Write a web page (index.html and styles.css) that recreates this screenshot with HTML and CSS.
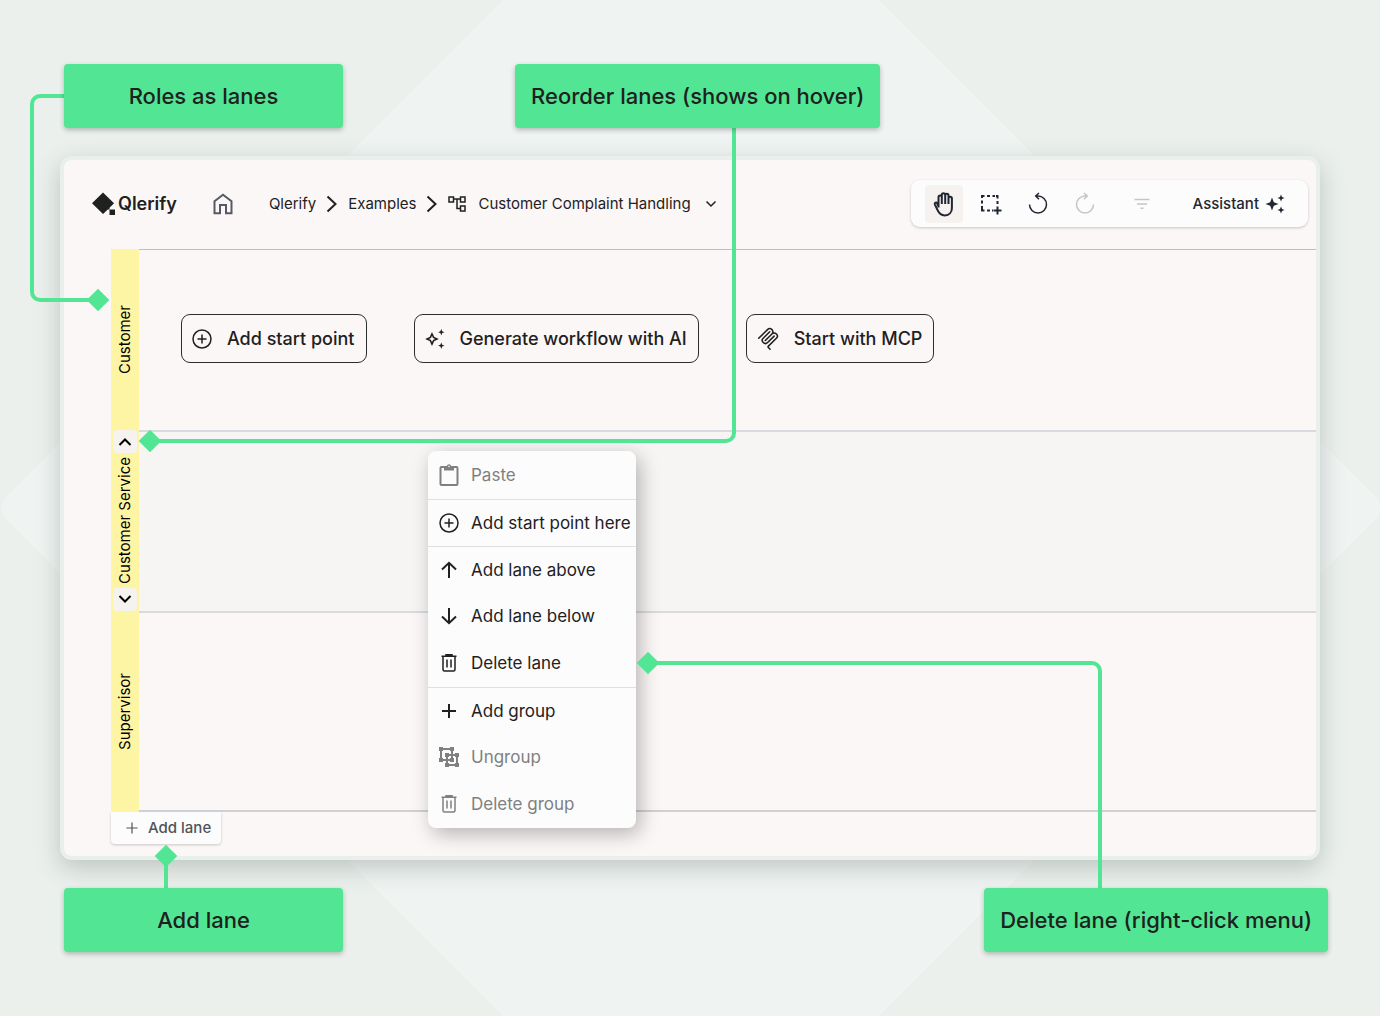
FILE: index.html
```html
<!DOCTYPE html>
<html lang="en">
<head>
<meta charset="utf-8">
<meta name="viewport" content="width=device-width, initial-scale=1">
<title>Qlerify – lanes</title>
<link rel="stylesheet" href="styles.css">
</head>
<body>
<svg class="backdrop" viewBox="0 0 1380 1016" preserveAspectRatio="xMidYMid slice" aria-hidden="true"><rect x="199" y="16" width="984" height="984" rx="14" transform="rotate(45 691 508)"/></svg>

<svg class="sprite" aria-hidden="true">
  <symbol id="plus-circle" viewBox="0 0 20 20"><circle cx="10" cy="10" r="9"/><path d="M10 5.500v9M5.500 10h9"/></symbol>
  <symbol id="trash" viewBox="0 0 20 20"><path d="M2.500 3.300h15M7 3V1.800h6V3M4 3.500v13a1.500 1.500 0 0 0 1.500 1.500h9a1.500 1.500 0 0 0 1.500-1.500v-13M8 6.500v8M12 6.500v8"/></symbol>
  <symbol id="plus" viewBox="0 0 20 20"><path d="M10 3v14M3 10h14"/></symbol>
  <symbol id="chevron" viewBox="0 0 12 18"><path d="M1.500 1.500 9.500 9l-8 7.500"/></symbol>
</svg>

<main class="stage">
  <div class="callouts callouts-top">
    <div class="callout">Roles as lanes</div>
    <div class="callout callout-reorder">Reorder lanes (shows on hover)</div>
  </div>

  <section class="window">
    <header class="header">
      <a class="logo" href="#">
        <svg width="24" height="24" viewBox="0 0 24 24"><path d="M11 .5 22 11.300 17.500 15.800V17.500H15.800L11 22 0 11.300z"/><path d="M17.500 17.500h5.500V23h-5.500z"/></svg>
        <span>Qlerify</span>
      </a>
      <a class="home" href="#" aria-label="Home"><svg class="line" width="20" height="22" viewBox="0 0 20 22"><path d="M1.500 8.300 10 1.800l8.500 6.500V20.200H13V12H7v8.200H1.500z"/></svg></a>
      <nav class="crumbs" aria-label="Breadcrumb">
        <a href="#">Qlerify</a>
        <svg class="line" width="12" height="18"><use href="#chevron"/></svg>
        <a href="#">Examples</a>
        <svg class="line" width="12" height="18"><use href="#chevron"/></svg>
        <a class="current" href="#">
          <svg class="line thin" width="18" height="18" viewBox="0 0 18 18"><path d="M1 2h4.500v5H1zM12.500 2H17v5h-4.500zM12.500 11H17v5h-4.500zM5.500 4h7M9 4v9.500h3.500"/></svg>
          Customer Complaint Handling
        </a>
        <button class="more" type="button" aria-label="Workflow options"><svg class="line thin" width="12" height="8" viewBox="0 0 12 8"><path d="M1.500 1.500 6 6l4.500-4.500"/></svg></button>
      </nav>
      <div class="toolbar">
        <button class="tool active" type="button" aria-label="Pan"><svg class="line" width="24" height="28" viewBox="0 0 24 28"><path d="M6.500 17.500V7.200a1.600 1.600 0 0 1 3.300 0V14M9.800 13V5a1.700 1.700 0 0 1 3.400 0v9M13.200 13V5.500a1.600 1.600 0 0 1 3.300 0V14M16.500 13V8.500a1.700 1.700 0 0 1 3.400 0V18c0 4.600-2.900 7.400-7 7.400-3.600 0-5.700-1.600-7-4.700L2.800 14.400c-.6-1.700 1.500-2.500 2.300-1.100l1.400 3"/></svg></button>
        <button class="tool" type="button" aria-label="Select area"><svg class="line" width="22" height="22" viewBox="0 0 22 22"><path d="M2 5V3h2.500M7 3h3M12.500 3h2.500M16 3h1.500v2.500M17.500 8v3M2 7.500v3M2 13v4.500h2.500M7 17.500h3M12 17.500h1M17.500 13.500v8M13.500 17.500h8"/></svg></button>
        <button class="tool" type="button" aria-label="Undo"><svg class="line thin" width="22" height="24" viewBox="0 0 22 24"><path d="M2.500 12.500a8.500 8.500 0 1 0 8.500-8.500H9M12 1 8.700 4 12 7.200"/></svg></button>
        <button class="tool" type="button" aria-label="Redo" disabled><svg class="line thin" width="22" height="24" viewBox="0 0 22 24"><path d="M19.500 12.500A8.500 8.500 0 1 1 11 4h2M10 1l3.300 3L10 7.200"/></svg></button>
        <button class="tool filter" type="button" aria-label="Filter" disabled><svg class="line thin" width="16" height="12" viewBox="0 0 16 12"><path d="M.5 1.500h15M3 6h10M6.500 10.200h3"/></svg></button>
        <button class="assistant" type="button">Assistant
          <svg width="20" height="20" viewBox="0 0 20 20"><path d="M7 3.500 8.800 8.200 13.500 10 8.800 11.800 7 16.500 5.200 11.800.5 10l4.700-1.800zM16 .5l1 2.500 2.500 1-2.500 1-1 2.500-1-2.500-2.500-1 2.500-1zM16 12.500l1 2.500 2.500 1-2.500 1-1 2.500-1-2.500-2.500-1 2.500-1z"/></svg>
        </button>
      </div>
    </header>

    <div class="lanes">
      <div class="lane">
        <div class="lane-head"><span>Customer</span></div>
        <div class="lane-body">
          <button class="start" type="button"><svg class="line thin" width="20" height="20"><use href="#plus-circle"/></svg>Add start point</button>
          <button class="start" type="button"><svg width="20" height="20" viewBox="0 0 20 20"><path class="hollow" d="M7 5 8.600 8.400 12 10 8.600 11.600 7 15 5.400 11.600 2 10l3.400-1.600z"/><path d="M16.300 0l.9 2.300 2.300.9-2.300.9-.9 2.300-.9-2.300-2.300-.9 2.300-.9zM16.300 13.500l.9 2.300 2.300.9-2.300.9-.9 2.300-.9-2.300-2.300-.9 2.300-.9z"/></svg>Generate workflow with AI</button>
          <button class="start" type="button"><svg width="22" height="24" viewBox="0 0 24 24"><path d="M15.688 2.343a2.588 2.588 0 00-3.610 0l-9.626 9.440a.863.863 0 01-1.203 0 .823.823 0 010-1.180l9.626-9.440a4.313 4.313 0 016.016 0 4.116 4.116 0 011.204 3.540 4.300 4.300 0 013.609 1.180l.05.05a4.115 4.115 0 010 5.900l-8.706 8.537a.274.274 0 000 .393l1.788 1.754a.823.823 0 010 1.180.863.863 0 01-1.203 0l-1.788-1.753a1.920 1.920 0 010-2.754l8.706-8.538a2.470 2.470 0 000-3.540l-.05-.049a2.588 2.588 0 00-3.607-.003l-7.172 7.034-.002.002-.098.097a.863.863 0 01-1.204 0 .823.823 0 010-1.180l7.273-7.133a2.470 2.470 0 00-.003-3.537z"/><path d="M14.485 4.703a.823.823 0 000-1.180.863.863 0 00-1.204 0l-7.119 6.982a4.115 4.115 0 000 5.900 4.314 4.314 0 006.016 0l7.120-6.982a.823.823 0 000-1.180.863.863 0 00-1.204 0l-7.119 6.982a2.588 2.588 0 01-3.610 0 2.470 2.470 0 010-3.540l7.120-6.982z"/></svg>Start with MCP</button>
        </div>
      </div>
      <div class="lane hovered">
        <div class="lane-head">
          <button class="move" type="button" aria-label="Move lane up"><svg class="line" width="14" height="10" viewBox="0 0 14 10"><path d="M1.500 8 7 2.500 12.500 8"/></svg></button>
          <span>Customer Service</span>
          <button class="move" type="button" aria-label="Move lane down"><svg class="line" width="14" height="10" viewBox="0 0 14 10"><path d="M1.500 2 7 7.500 12.500 2"/></svg></button>
        </div>
        <div class="lane-body"></div>
      </div>
      <div class="lane last">
        <div class="lane-head"><span>Supervisor</span></div>
        <div class="lane-body"></div>
      </div>
      <button class="add-lane" type="button"><svg class="line thin" width="16" height="16"><use href="#plus"/></svg>Add lane</button>
    </div>
  </section>

  <div class="callouts callouts-bottom">
    <div class="callout">Add lane</div>
    <div class="callout">Delete lane (right-click menu)</div>
  </div>

  <div class="connector to-roles"></div>
  <div class="connector to-reorder"></div>
  <div class="connector to-delete"></div>
  <div class="connector to-add"></div>

  <div class="menu" role="menu">
    <button role="menuitem" type="button" disabled><svg class="line" width="20" height="24" viewBox="0 0 20 24"><rect x="1.500" y="4" width="17" height="18" rx="1"/><path class="solid" d="M5 3h2.800a2.300 2.300 0 0 1 4.400 0H15v4.500H5z"/><circle cx="10" cy="3.500" r=".8" fill="#fcfcfc" stroke="none"/></svg>Paste</button>
    <button class="divided" role="menuitem" type="button"><svg class="line thin" width="20" height="20"><use href="#plus-circle"/></svg>Add start point here</button>
    <button class="divided" role="menuitem" type="button"><svg class="line" width="20" height="20" viewBox="0 0 20 20"><path d="M10 18V3M3 9.500 10 2.800l7 6.700"/></svg>Add lane above</button>
    <button role="menuitem" type="button"><svg class="line" width="20" height="20" viewBox="0 0 20 20"><path d="M10 2v15M3 10.500l7 6.700 7-6.700"/></svg>Add lane below</button>
    <button role="menuitem" type="button"><svg class="line thin" width="20" height="20"><use href="#trash"/></svg>Delete lane</button>
    <button class="divided" role="menuitem" type="button"><svg class="line" width="20" height="20"><use href="#plus"/></svg>Add group</button>
    <button role="menuitem" type="button" disabled><svg class="line" width="20" height="20" viewBox="0 0 20 20"><path d="M2 2h11v11H2zM8 8h10v10H8z"/><path class="solid" d="M0 0h4v4H0zM11 0h4v4h-4zM0 11h4v4H0zM11 11h4v4h-4zM6 6h4v4H6zM16 6h4v4h-4zM6 16h4v4H6zM16 16h4v4h-4z"/></svg>Ungroup</button>
    <button role="menuitem" type="button" disabled><svg class="line thin" width="20" height="20"><use href="#trash"/></svg>Delete group</button>
  </div>
</main>
</body>
</html>
```
FILE: styles.css
```css
:root {
  --green: #52e694;
  --ink: #1e211e;
  --navy: #202632;
  --canvas: #fbf7f6;
  --paper: #fcfcfc;
  --rule: #d9dadf;
}

* { box-sizing: border-box; }

body {
  margin: 0;
  min-height: 100vh;
  background: #ebf0ec;
  color: var(--ink);
  font: 15px/24px Inter, "Liberation Sans", sans-serif;
}

button {
  margin: 0;
  padding: 0;
  border: 0;
  background: none;
  color: inherit;
  font: inherit;
}

a { color: inherit; text-decoration: none; }

svg { flex: none; fill: currentColor; }
.line { fill: none; stroke: currentColor; stroke-width: 2; }
.thin { stroke-width: 1.5; }
.solid { fill: currentColor; stroke: none; }
.hollow { fill: none; stroke: currentColor; stroke-width: 1.6; }
.sprite { position: absolute; width: 0; height: 0; }

.backdrop {
  position: absolute;
  inset: 0;
  z-index: -1;
  width: 100%;
  height: 100%;
  fill: #eff3f2;
}

.stage {
  position: relative;
  display: flex;
  flex-direction: column;
  gap: 28px;
  padding: 64px 52px 64px 60px;
}

/* Callouts */
.callouts {
  position: relative;
  z-index: 2;
  display: flex;
  padding-left: 4px;
}
.callouts-top { gap: 172px; }
.callouts-bottom { justify-content: space-between; }

.callout {
  display: flex;
  align-items: center;
  justify-content: center;
  min-width: 279px;
  height: 64px;
  padding: 0 16px;
  border-radius: 4px;
  background: var(--green);
  box-shadow: 0 2px 5px rgba(30, 50, 40, .3);
  font-size: 22px;
  font-weight: 500;
  white-space: nowrap;
}

/* App window */
.window {
  margin-right: 8px;
  border: 4px solid #e9efeb;
  border-radius: 12px;
  background: var(--canvas);
  box-shadow: 0 8px 24px rgba(60, 75, 68, .26);
}

.header {
  display: flex;
  align-items: center;
  height: 89px;
  padding: 0 8px 2px 28px;
}

.logo {
  display: flex;
  align-items: center;
  gap: 2px;
  font-size: 18px;
  font-weight: 600;
}
.home { display: flex; margin-left: 36px; color: #565a66; }

.crumbs {
  display: flex;
  align-items: center;
  gap: 10px;
  margin-left: 36px;
  white-space: nowrap;
}
.current { display: flex; align-items: center; gap: 12px; }
.more { display: flex; margin-left: 4px; }

.toolbar {
  display: flex;
  align-items: center;
  gap: 9px;
  height: 47px;
  margin-left: auto;
  padding: 0 23px 0 14px;
  border-radius: 9px;
  background: var(--paper);
  box-shadow: 0 1px 3px rgba(0, 0, 0, .2);
  color: var(--navy);
}
.tool {
  display: flex;
  align-items: center;
  justify-content: center;
  width: 38px;
  height: 38px;
  border-radius: 4px;
}
.tool:disabled { color: #c4c5c7; }
.active { background: #f6f2ef; }
.filter { margin-left: 10px; }
.assistant {
  display: flex;
  align-items: center;
  gap: 6px;
  margin-left: 23px;
  font-weight: 500;
}

/* Lanes */
.lanes { padding: 0 0 12px 47px; }
.lane { display: flex; height: 181px; }
.lane-head {
  display: flex;
  flex-direction: column;
  align-items: center;
  justify-content: center;
  width: 28px;
  background: #fdf5a4;
  color: #000;
}
.lane-head span {
  writing-mode: vertical-rl;
  transform: rotate(180deg);
  white-space: nowrap;
}
.lane-body {
  display: flex;
  flex: 1;
  align-items: center;
  gap: 47px;
  padding: 0 0 3px 42px;
  border-top: 1px solid #bcbdc6;
}
.hovered .lane-head { justify-content: space-between; }
.hovered .lane-body { background: #f6f5f3; }
.hovered .lane-body,
.last .lane-body { border-top: 2px solid var(--rule); }
.last { height: 201px; }
.last .lane-body { border-bottom: 2px solid #cfd0d4; }

.move {
  display: flex;
  align-items: center;
  justify-content: center;
  width: 24px;
  height: 23px;
  border-radius: 4px;
  background: #f5f2ef;
}

.start {
  display: flex;
  align-items: center;
  gap: 15px;
  height: 49px;
  padding: 0 11px 0 10px;
  border: 1px solid #2c2c2c;
  border-radius: 9px;
  font-size: 18px;
  font-weight: 500;
  white-space: nowrap;
}

.add-lane {
  display: flex;
  align-items: center;
  gap: 8px;
  height: 32px;
  padding: 0 10px 0 13px;
  border-radius: 0 0 4px 4px;
  background: var(--paper);
  box-shadow: 0 1px 3px rgba(0, 0, 0, .2);
  color: #4f535b;
  font-weight: 500;
}

/* Lines that tie each callout to the part it names */
.connector {
  position: absolute;
  z-index: 1;
  border: 0 solid var(--green);
}
.connector::after {
  content: "";
  position: absolute;
  width: 16px;
  height: 16px;
  background: var(--green);
  transform: rotate(45deg);
}
.to-roles {
  top: 94px;
  left: 30px;
  width: 68px;
  height: 208px;
  border-width: 4px 0 4px 4px;
  border-radius: 10px 0 0 10px;
}
.to-roles::after { right: -8px; bottom: -10px; }
.to-reorder {
  top: 128px;
  left: 150px;
  width: 586px;
  height: 315px;
  border-width: 0 4px 4px 0;
  border-radius: 0 0 10px 0;
}
.to-reorder::after { left: -8px; bottom: -10px; }
.to-delete {
  top: 661px;
  right: 278px;
  left: 648px;
  height: 227px;
  border-width: 4px 4px 0 0;
  border-radius: 0 10px 0 0;
}
.to-delete::after { top: -10px; left: -8px; }
.to-add {
  top: 856px;
  left: 164px;
  height: 32px;
  border-left-width: 4px;
}
.to-add::after { top: -8px; left: -10px; }

/* Right-click menu */
.menu {
  position: absolute;
  top: 451px;
  left: 428px;
  display: flex;
  flex-direction: column;
  width: 208px;
  padding-top: 1px;
  border-radius: 8px;
  background: var(--paper);
  box-shadow: 4px 6px 20px rgba(0, 0, 0, .28);
  font-size: 17px;
}
.menu button {
  display: flex;
  align-items: center;
  gap: 12px;
  height: 47px;
  padding: 0 0 1px 11px;
  white-space: nowrap;
}
.menu .divided { border-top: 1px solid #dedfe1; }
.menu button:disabled { color: #808080; }
```
